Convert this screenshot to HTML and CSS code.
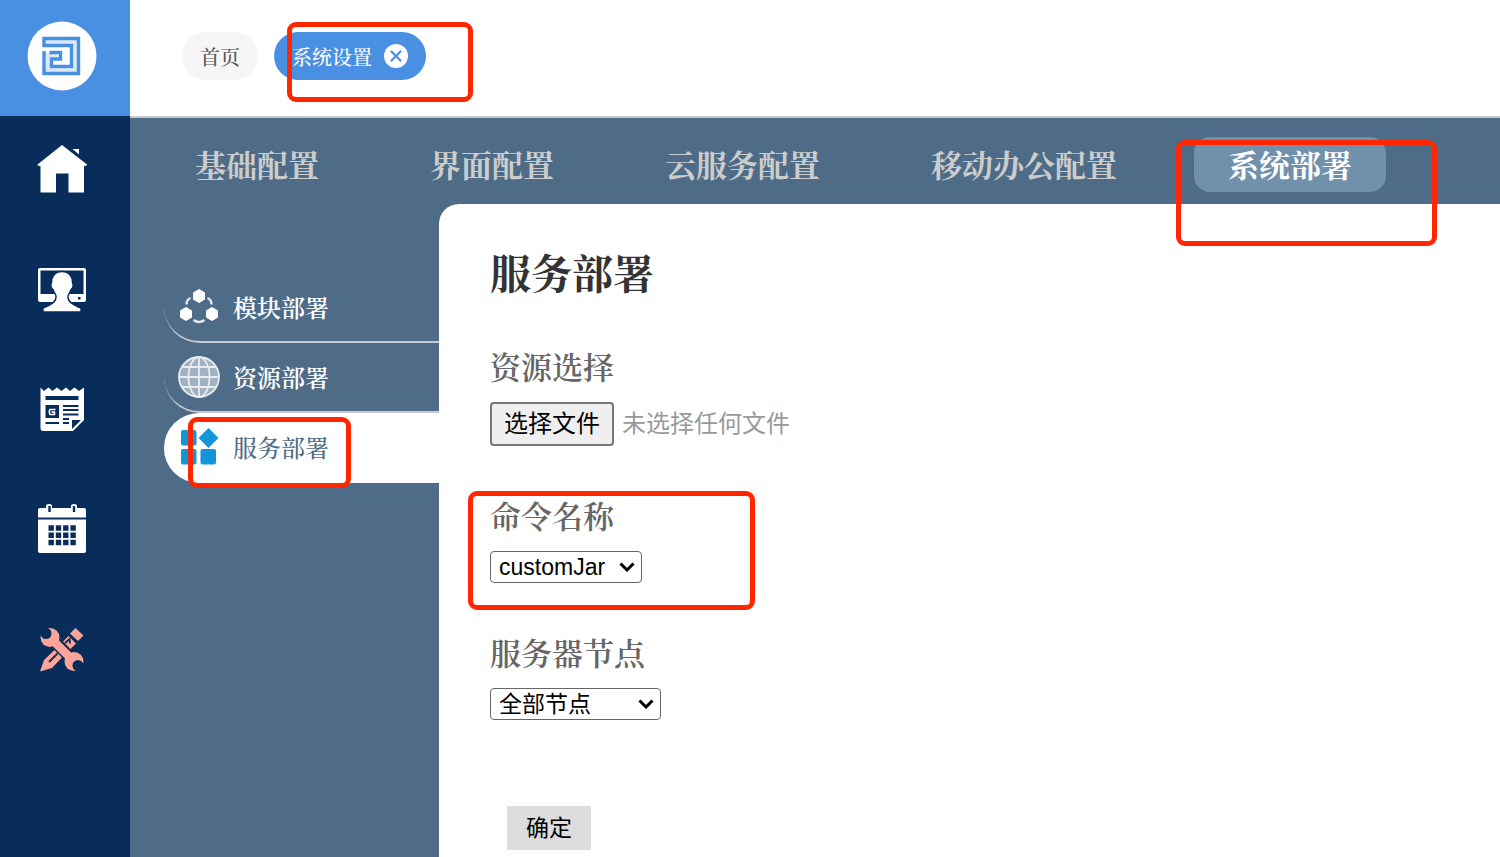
FILE: index.html
```html
<!DOCTYPE html>
<html lang="zh-CN">
<head>
<meta charset="utf-8">
<meta name="viewport" content="width=device-width, initial-scale=1">
<title>系统设置</title>
<link rel="stylesheet" href="styles.css">
</head>
<body>
<div class="shell">
  <aside class="sidebar">
    <a class="logo" href="#" aria-label="Logo">
      <svg viewBox="0 0 70 70" width="70" height="70">
        <circle cx="35" cy="35" r="34.500" fill="#fff"/>
        <path d="M17 21H49V50H21V34H30" fill="none" stroke="#dce8f8" stroke-width="5"/>
        <g fill="none" stroke="#4a90e2" stroke-width="3.400">
          <path d="M17 26V17.500H51.500V52.500H17V30"/>
          <path d="M16 24.500H44.500V45.500H24.500V38H33.500V31.500H22.500"/>
        </g>
      </svg>
    </a>
    <nav class="rail">
      <a href="#" aria-label="主页">
        <svg viewBox="0 0 52 52" width="52" height="52" fill="#fff">
          <path d="M26 2L51 21.500Q51 23.500 48 22.800V49.500H32.500V30.500H20V49.500H4.500V22.800Q1.500 23.500 1.500 21.500Z"/>
          <path d="M36.500 6H43V11.500Z"/>
        </svg>
      </a>
      <a href="#" aria-label="用户">
        <svg viewBox="0 0 52 52" width="52" height="52">
          <path fill="#fff" fill-rule="evenodd" d="M4 5H48Q50 5 50 7V37Q50 39 48 39H4Q2 39 2 37V7Q2 5 4 5ZM4.500 7.500V31H47.500V7.500Z"/>
          <path d="M26 8.500C19 8.500 15 14 15.500 20C14.500 22 15 25 17 26.500C18 30 20 31 20 33C20.500 38 17 41 7 45V49H45V45C35 41 31.500 38 32 33C32.500 31 34 30 35 26.500C37 25 37.500 22 36.500 20C37 14 33 8.500 26 8.500Z" fill="#fff" stroke="#092d5a" stroke-width="1.400"/>
          <rect x="42" y="34" width="2.500" height="2.500" fill="#092d5a"/>
        </svg>
      </a>
      <a href="#" aria-label="新闻">
        <svg viewBox="0 0 52 52" width="52" height="52">
          <path fill="#fff" d="M4.500 4.500L8 8L12.500 4.500L16.500 8L21 4.500L25.500 8L30 4.500L34 8L38.500 4.500L43 8L48 4.500V37L37 48H7Q4.500 48 4.500 45Z"/>
          <g fill="#092d5a">
            <path d="M9.500 13H42.500V17H9.500ZM9.500 22H23V35H9.500ZM27 22H42.500V24H27ZM27 26H42.500V28H27ZM27 30.500H42.500V32.500H27ZM27 35H33V37H27ZM27 39H33V41H27ZM9.500 39H23V41H9.500ZM36 37H45L36 46Z"/>
          </g>
          <path d="M19.500 26.500H14Q12.500 28.500 14 31.500H18.500V29H15.500" fill="none" stroke="#fff" stroke-width="1.500"/>
        </svg>
      </a>
      <a href="#" aria-label="日历">
        <svg viewBox="0 0 52 52" width="52" height="52">
          <path fill="#fff" d="M4 5H10V3Q10 1 13 1T16 3V5H35V3Q35 1 38 1T41 3V5H48Q50 5 50 7V14.500H2V7Q2 5 4 5ZM2 16.500H50V48Q50 50 48 50H4Q2 50 2 48Z"/>
          <path d="M13.500 3V9M38 3V9" stroke="#092d5a" stroke-width="2.400"/>
          <path d="M12.500 25H40M12.500 32.300H40M12.500 39.500H40" stroke="#092d5a" stroke-width="5.400" stroke-dasharray="5.400 1.900"/>
        </svg>
      </a>
      <a href="#" aria-label="工具">
        <svg viewBox="0 0 52 52" width="52" height="52" fill="#fda49a">
          <mask id="jaws">
            <rect width="52" height="52" fill="#fff"/>
            <circle cx="10" cy="10.500" r="5.500" fill="#000"/>
            <path d="M1 4L5 0L14 7L7 14Z" fill="#000"/>
            <circle cx="42" cy="42.500" r="5.500" fill="#000"/>
            <path d="M51 49L47 53L38 46L45 39Z" fill="#000"/>
          </mask>
          <path d="M39.500 5L47.500 12.500L42 18L34 10.500Z"/>
          <path d="M32.500 13L40 20.500L34.500 26L27 18.500ZM18.500 27L26 34.500L16 45L4 48.500L8 37Z"/>
          <path d="M29 20L33.500 16L34 20.500M13 39L21.500 30.500" fill="none" stroke="#092d5a" stroke-width="1.800"/>
          <path d="M17 17.500L36 36.500" stroke="#092d5a" stroke-width="11"/>
          <g mask="url(#jaws)">
            <circle cx="14" cy="14.500" r="9.500"/>
            <circle cx="38" cy="38.500" r="9.500"/>
            <path d="M15 15.500L37 37.500" stroke="#fda49a" stroke-width="8.500"/>
          </g>
        </svg>
      </a>
    </nav>
  </aside>

  <div class="main">
    <header class="tabs">
      <a class="tab" href="#">首页</a>
      <div class="tab tab-active">
        <a href="#">系统设置</a>
        <button class="close" type="button" aria-label="关闭">
          <svg viewBox="0 0 24 24" width="24" height="24">
            <circle cx="12" cy="12" r="12" fill="#fff"/>
            <path d="M7.500 7.500L16.500 16.500M16.500 7.500L7.500 16.500" stroke="#4a90e2" stroke-width="2.200" stroke-linecap="round"/>
          </svg>
        </button>
        <span class="mark mark-tab"></span>
      </div>
    </header>

    <nav class="topnav">
      <a href="#">基础配置</a>
      <a href="#">界面配置</a>
      <a href="#">云服务配置</a>
      <a href="#">移动办公配置</a>
      <a class="current" href="#">系统部署<span class="mark mark-nav"></span></a>
    </nav>

    <div class="body">
      <nav class="sidenav">
        <a href="#">
          <svg viewBox="0 0 42 42" width="42" height="42">
            <path fill="#fff" d="M21 4L26 7V13L21 16L16 13V7ZM8 22L13 25V31L8 34L3 31V25ZM34 22L39 25V31L34 34L29 31V25Z" stroke="#fff" stroke-width="2" stroke-linejoin="round"/>
            <path d="M12.500 12Q8.500 13.500 8.500 18.500M29.500 12Q33.500 13.500 33.500 18.500M15.500 34Q21 38 26.500 34" fill="none" stroke="#e4e9ee" stroke-width="2.400"/>
          </svg>
          模块部署
        </a>
        <a href="#">
          <svg viewBox="0 0 42 42" width="42" height="42">
            <circle cx="21" cy="21" r="20" fill="#a0b1c1"/>
            <g fill="none" stroke="#e9edf1" stroke-width="1.800">
              <circle cx="21" cy="21" r="20"/>
              <ellipse cx="21" cy="21" rx="10.500" ry="20"/>
              <path d="M21 1V41M1 21H41M4.500 11H37.500M4.500 31H37.500"/>
            </g>
          </svg>
          资源部署
        </a>
        <a class="current" href="#">
          <svg viewBox="0 0 42 42" width="42" height="42" fill="#1296db">
            <rect x="3" y="4" width="15.500" height="15.500" rx="2"/>
            <rect x="3" y="23" width="15.500" height="15.500" rx="2"/>
            <rect x="22.500" y="23" width="15.500" height="15.500" rx="2"/>
            <path d="M30.500 2L40.500 12L30.500 22L20.500 12Z"/>
          </svg>
          服务部署
          <span class="mark mark-side"></span>
        </a>
      </nav>

      <main class="panel">
        <h1>服务部署</h1>
        <form class="form">
          <div class="field">
            <label for="file">资源选择</label>
            <div class="file">
              <input id="file" type="file" tabindex="-1">
              <button type="button" onclick="document.getElementById('file').click()">选择文件</button>
              <span>未选择任何文件</span>
            </div>
          </div>
          <div class="field">
            <label for="command">命令名称</label>
            <div class="select">
              <select id="command" class="short"><option>customJar</option></select>
              <svg viewBox="0 0 16 10" width="16" height="10"><path d="M1.500 1.500L8 8L14.500 1.500" fill="none" stroke="#000" stroke-width="3"/></svg>
            </div>
            <span class="mark mark-field"></span>
          </div>
          <div class="field">
            <label for="node">服务器节点</label>
            <div class="select">
              <select id="node"><option>全部节点</option></select>
              <svg viewBox="0 0 16 10" width="16" height="10"><path d="M1.500 1.500L8 8L14.500 1.500" fill="none" stroke="#000" stroke-width="3"/></svg>
            </div>
          </div>
          <button class="submit" type="button">确定</button>
        </form>
      </main>
    </div>
  </div>
</div>
</body>
</html>
```
FILE: styles.css
```css
* {
  box-sizing: border-box;
}

body {
  margin: 0;
  font-family: "Songti SC", "Noto Serif CJK SC", "Noto Sans CJK SC", serif;
  color: #333;
  background: #fff;
}

a {
  color: inherit;
  text-decoration: none;
}

svg {
  display: block;
  flex: none;
}

button,
select {
  margin: 0;
  font-family: "Liberation Sans", "Noto Sans CJK SC", sans-serif;
  color: #000;
}

.shell {
  display: grid;
  grid-template-columns: 130px minmax(0, 1fr);
  min-height: 100vh;
}

/* Left rail */
.sidebar {
  background: #092d5a;
}

.logo {
  display: flex;
  justify-content: center;
  align-items: center;
  height: 116px;
  padding: 0 7px 4px 0;
  background: #4a90e2;
}

.rail {
  display: flex;
  flex-direction: column;
  align-items: center;
  gap: 68px;
  padding: 27px 7px 0 0;
}

.main {
  display: flex;
  flex-direction: column;
}

/* Open tabs */
.tabs {
  display: flex;
  align-items: center;
  gap: 16px;
  height: 118px;
  padding: 0 52px 4px;
  border-bottom: 2px solid #c4cacf;
}

.tab {
  display: flex;
  align-items: center;
  height: 48px;
  padding: 0 18px;
  border-radius: 24px;
  font-size: 20px;
  font-weight: 500;
  color: #555;
  background: #f6f6f6;
}

.tab-active {
  position: relative;
  gap: 12px;
  color: #fff;
  background: #4a90e2;
}

.close {
  padding: 0;
  border: 0;
  background: none;
}

/* Section navigation */
.topnav {
  display: flex;
  gap: 43px;
  height: 86px;
  padding: 19px 31px 12px;
  background: #4e6c87;
}

.topnav a {
  padding: 0 34px;
  border-radius: 16px;
  font-size: 31px;
  font-weight: 700;
  line-height: 53px;
  white-space: nowrap;
  color: #ccc;
}

.topnav .current {
  position: relative;
  color: #fff;
  background: #7190ac;
}

.body {
  display: grid;
  grid-template-columns: 309px minmax(0, 1fr);
  flex: 1;
  background: #4e6c87;
}

.sidenav {
  padding: 69px 0 0 34px;
}

.sidenav a {
  display: flex;
  align-items: center;
  gap: 13px;
  height: 70px;
  padding-left: 14px;
  border-bottom: 2px solid #c9c9cf;
  border-radius: 0 0 0 36px;
  font-size: 24px;
  font-weight: 600;
  line-height: 32px;
  color: #fff;
}

.sidenav .current {
  position: relative;
  border-bottom-color: #fff;
  border-radius: 36px 0 0 36px;
  font-weight: 500;
  color: #4e6c87;
  background: #fff;
}

/* Content */
.panel {
  padding: 38px 51px 0;
  border-top-left-radius: 20px;
  background: #fff;
}

.panel h1 {
  margin: 0 0 46px;
  font-size: 41px;
  font-weight: 700;
  line-height: 60px;
}

.form {
  display: flex;
  flex-direction: column;
  align-items: flex-start;
  gap: 51px;
}

.field {
  position: relative;
  display: flex;
  flex-direction: column;
  align-items: flex-start;
  gap: 18px;
}

.field label {
  font-size: 31px;
  font-weight: 600;
  line-height: 36px;
  color: #666;
}

.file {
  position: relative;
  display: flex;
  align-items: center;
  gap: 8px;
  height: 44px;
  font-family: "Liberation Sans", "Noto Sans CJK SC", sans-serif;
  font-size: 24px;
  line-height: 40px;
  color: #999;
}

.file input {
  position: absolute;
  width: 1px;
  height: 1px;
  opacity: 0;
}

.file button {
  height: 44px;
  padding: 0 12px;
  border: 2px solid #767676;
  border-radius: 4px;
  font-size: 24px;
  line-height: 36px;
  background: #efefef;
}

.select {
  position: relative;
}

.select select {
  width: 171px;
  height: 32px;
  padding: 0 28px 0 8px;
  border: 1px solid #666;
  border-radius: 4px;
  font-size: 23px;
  line-height: 30px;
  background: #fff;
  appearance: none;
}

.select .short {
  width: 152px;
}

.select svg {
  position: absolute;
  top: 11px;
  right: 7px;
  pointer-events: none;
}

.submit {
  height: 44px;
  margin: 35px 0 0 17px;
  padding: 0 19px 4px;
  border: 0;
  font-size: 23px;
  background: #ddd;
}

/* Highlight frames */
.mark {
  position: absolute;
  border: 5px solid #ff2600;
  border-radius: 9px;
  pointer-events: none;
}

.mark-tab {
  top: -10px;
  left: 13px;
  width: 186px;
  height: 80px;
}

.mark-nav {
  top: 3px;
  left: -18px;
  width: 261px;
  height: 106px;
}

.mark-side {
  top: 4px;
  left: 24px;
  width: 163px;
  height: 71px;
}

.mark-field {
  top: -6px;
  left: -22px;
  width: 287px;
  height: 119px;
}
```
